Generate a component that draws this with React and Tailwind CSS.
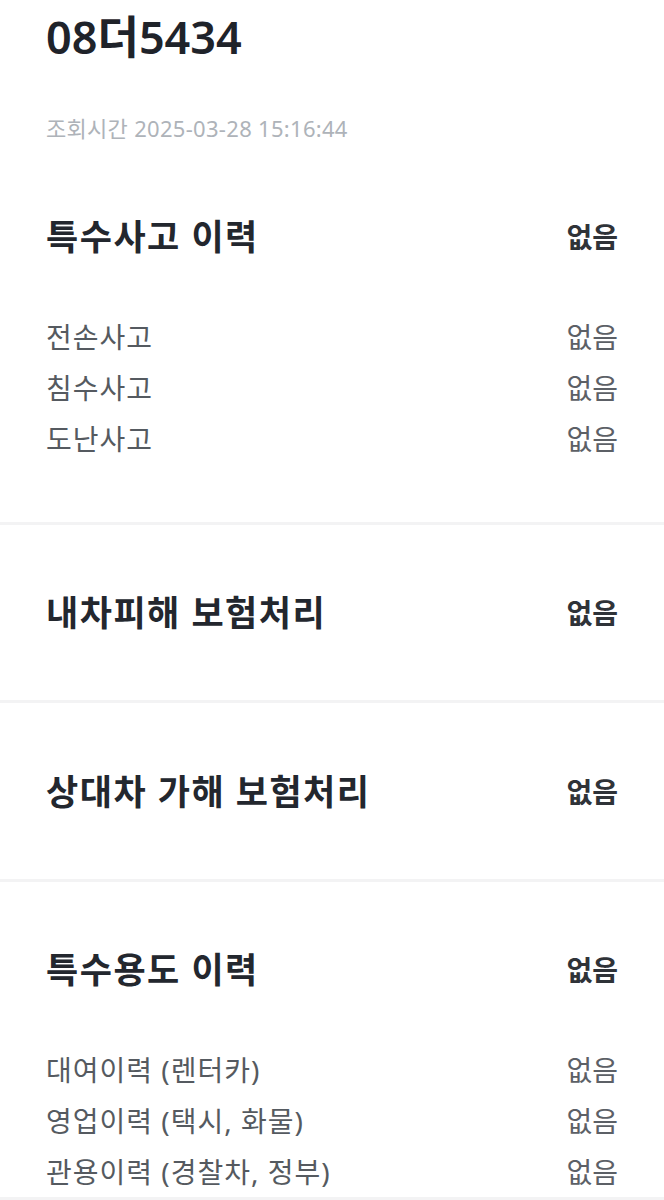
const FONT = { fontFamily: '"Noto Sans", "Noto Sans CJK KR", sans-serif' };

const accidents = ["전손사고", "침수사고", "도난사고"];
const usages = ["대여이력 (렌터카)", "영업이력 (택시, 화물)", "관용이력 (경찰차, 정부)"];

function TitleRow({ title }) {
  return (
    <div className="flex items-center justify-between h-[44px]">
      <h3 className="text-[35px] font-bold text-[#23272e] tracking-[1.5px]">{title}</h3>
      <span className="text-[28px] font-bold text-[#2f3338]">없음</span>
    </div>
  );
}

function SubRows({ items }) {
  return (
    <ul className="mt-[52px]">
      {items.map((item) => (
        <li key={item} className="flex items-center justify-between h-[51px]">
          <span className="text-[28px] tracking-[1px] text-[#555a60]">{item}</span>
          <span className="text-[28px] text-[#5c6066]">없음</span>
        </li>
      ))}
    </ul>
  );
}

function Divider() {
  return <div className="h-[3px] bg-[#f3f3f4]" />;
}

export default function App() {
  return (
    <div className="min-h-screen bg-white" style={FONT}>
      <div className="px-[46px] pt-[10px] pb-[58px]">
        <h1 className="text-[45px] leading-[54px] font-semibold text-[#1f232a]">
          08더5434
        </h1>
        <p className="mt-[50px] text-[22px] leading-[28px] tracking-[0.3px] text-[#aeb3b9]">
          조회시간 2025-03-28 15:16:44
        </p>

        <div className="mt-[73px]">
          <TitleRow title="특수사고 이력" />
          <SubRows items={accidents} />
        </div>
      </div>

      <Divider />
      <div className="px-[46px] pt-[66px] pb-[65px]">
        <TitleRow title="내차피해 보험처리" />
      </div>

      <Divider />
      <div className="px-[46px] pt-[67px] pb-[65px]">
        <TitleRow title="상대차 가해 보험처리" />
      </div>

      <Divider />
      <div className="px-[46px] pt-[66px]">
        <TitleRow title="특수용도 이력" />
        <SubRows items={usages} />
      </div>
      <Divider />
    </div>
  );
}
